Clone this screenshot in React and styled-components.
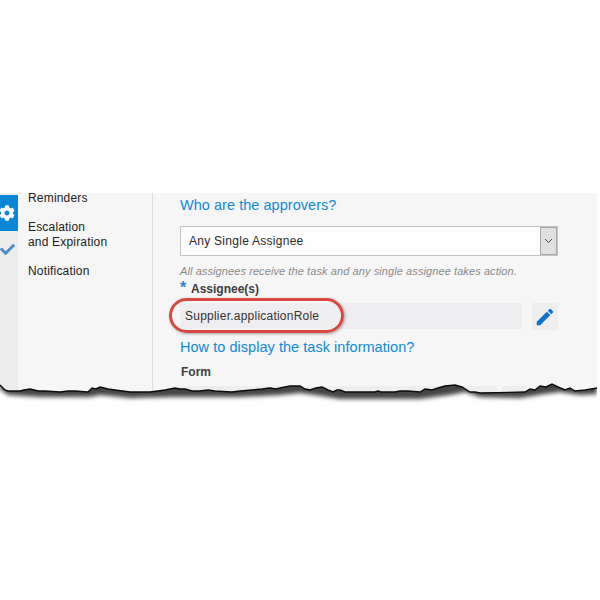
import React from "react";
import styled, { createGlobalStyle } from "styled-components";
import { FaCog, FaCheck } from "react-icons/fa";
import { MdEdit } from "react-icons/md";

const Global = createGlobalStyle`
  html, body { margin: 0; padding: 0; background: #fff; }
  body { font-family: "Liberation Sans", Arial, sans-serif; }
`;

const Page = styled.div`
  width: 600px;
  height: 600px;
  padding-top: 193px;
  box-sizing: border-box;
  overflow: hidden;
`;
const Sheet = styled.div`
  position: relative;
  width: 597px;
  height: 230px;
  overflow: hidden;
`;
const Card = styled.div`
  display: flex;
  height: 200px;
  background: #f6f6f6;
  overflow: hidden;
`;
const Rail = styled.div`
  width: 18px;
  flex: none;
  background: #ececec;
  padding-top: 2px;
  display: flex;
  flex-direction: column;
  overflow: hidden;
`;
const RailItem = styled.div`
  width: 18px;
  height: 36px;
  display: flex;
  align-items: center;
  justify-content: center;
  box-sizing: border-box;
  padding-right: 4px;
  color: ${(p) => (p.$active ? "#fff" : "#4a8ccb")};
  background: ${(p) => (p.$active ? "#0a87d4" : "transparent")};
  svg { flex: none; }
`;
const Sidebar = styled.nav`
  width: 135px;
  flex: none;
  box-sizing: border-box;
  border-right: 1px solid #dcdcdc;
  padding-left: 10px;
  display: flex;
  flex-direction: column;
  gap: 14px;
  font-size: 12px;
  letter-spacing: 0.18px;
  line-height: 15px;
  color: #1c1c1c;
`;
const NavItem = styled.div`
  &:first-child {
    line-height: 11px;
    margin-bottom: 2px;
  }
`;
const Content = styled.main`
  flex: 1;
  padding: 4px 39px 0 27px;
  min-width: 0;
`;
const Heading = styled.h2`
  margin: 0;
  font-weight: 400;
  font-size: 14.5px;
  line-height: 17px;
  letter-spacing: 0.04px;
  color: #0e8ad8;
`;
const SelectBox = styled.div`
  margin-top: 12px;
  height: 30px;
  box-sizing: border-box;
  border: 1px solid #c4c4c4;
  background: #fdfdfe;
  display: flex;
  align-items: center;
  justify-content: space-between;
  padding-left: 8px;
  font-size: 12px;
  letter-spacing: 0.27px;
  color: #2a2a2a;
`;
const SelectButton = styled.div`
  width: 17px;
  height: 28px;
  box-sizing: border-box;
  border: 1px solid #a8a8a8;
  background: #e0e0e0;
  display: flex;
  align-items: center;
  justify-content: center;
`;
const Hint = styled.div`
  margin-top: 9px;
  font-size: 11px;
  line-height: 13px;
  font-style: italic;
  letter-spacing: 0.09px;
  color: #8a8a8a;
`;
const Label = styled.div`
  margin-top: 4px;
  display: flex;
  align-items: flex-start;
  gap: 5px;
  font-size: 12px;
  line-height: 14px;
  font-weight: 700;
  color: #3d3d3d;
`;
const Star = styled.span`
  color: #2f7fc8;
  font-weight: 700;
  font-size: 16px;
  line-height: 12px;
  width: 6px;
`;
const Row = styled.div`
  margin-top: 7px;
  display: flex;
  gap: 10px;
`;
const Field = styled.div`
  position: relative;
  flex: 1;
  height: 26px;
  background: #eeeef0;
  padding-left: 5px;
  display: flex;
  align-items: center;
  font-size: 12px;
  letter-spacing: 0.23px;
  color: #333;
`;
const Callout = styled.div`
  position: absolute;
  left: -11px;
  top: -5px;
  width: 175px;
  height: 35px;
  box-sizing: border-box;
  border: 3.5px solid #d9473f;
  border-radius: 18px;
  box-shadow: 1px 1px 3px rgba(0, 0, 0, 0.35);
`;
const EditButton = styled.div`
  width: 26px;
  height: 27px;
  flex: none;
  background: #eeeeee;
  display: flex;
  align-items: center;
  justify-content: center;
  color: #0a72cf;
`;
const SectionHeading = styled(Heading)`
  margin-top: 9px;
`;
const FormLabel = styled.div`
  margin-top: 9px;
  padding-left: 1px;
  font-size: 12px;
  line-height: 14px;
  font-weight: 700;
  color: #3d3d3d;
`;
const FormRow = styled.div`
  margin-top: 7px;
  display: flex;
  gap: 5px;
  padding-right: 31px;
`;
const FormField = styled.div`
  flex: 1;
  height: 26px;
  background: #eeeeee;
`;
const FormButton = styled.div`
  width: 25px;
  height: 26px;
  background: #eeeeee;
`;
const Torn = styled.svg`
  position: absolute;
  left: 0;
  top: 180px;
  display: block;
`;

const edge = "M0,12 L5,17 L8,18 L20,18 L24,17 L30,16 L38,18 L45,18 L60,19 L68,18 L75,18 L88,19 L92,15 L96,16 L100,14 L108,16 L115,17 L130,19 L150,19 L158,18 L165,17 L175,15 L180,16 L185,16 L192,18 L200,18 L208,17 L215,18 L232,19 L240,18 L252,17 L262,16 L270,15 L276,16 L280,15 L285,14 L290,13 L300,13 L305,16 L310,17 L316,15 L322,14 L328,17 L333,19 L337,17 L340,17 L345,19 L350,19 L375,19 L378,18 L381,19 L395,19 L400,18 L408,18 L420,19 L425,16 L432,17 L438,15 L445,13 L455,12 L462,14 L470,19 L475,19 L480,20 L525,19 L530,16 L535,17 L540,13 L546,14 L552,11 L558,14 L565,17 L570,15 L575,18 L585,17 L597,15";
const shadow = "M0,16 L8,22 L40,24 L90,24 L100,22 L130,25 L170,24 L200,24 L240,24 L280,22 L300,20 L315,22 L340,26 L420,26 L450,22 L465,19 L480,24 L520,25 L545,21 L560,19 L580,22 L597,21 L597,0 L0,0 Z";

export default function App() {
  return (
    <Page>
      <Global />
      <Sheet>
        <Card>
          <Rail>
            <RailItem $active><FaCog size={16} /></RailItem>
            <RailItem><FaCheck size={15} /></RailItem>
          </Rail>
          <Sidebar>
            <NavItem>Reminders</NavItem>
            <NavItem>Escalation<br />and Expiration</NavItem>
            <NavItem>Notification</NavItem>
          </Sidebar>
          <Content>
            <Heading>Who are the approvers?</Heading>
            <SelectBox>
              Any Single Assignee
              <SelectButton>
                <svg width="9" height="6" viewBox="0 0 9 6"><path d="M1 1l3.5 3.5L8 1" fill="none" stroke="#444" strokeWidth="1" /></svg>
              </SelectButton>
            </SelectBox>
            <Hint>All assignees receive the task and any single assignee takes action.</Hint>
            <Label><Star>*</Star>Assignee(s)</Label>
            <Row>
              <Field>
                Supplier.applicationRole
                <Callout />
              </Field>
              <EditButton><MdEdit size={22} /></EditButton>
            </Row>
            <SectionHeading>How to display the task information?</SectionHeading>
            <FormLabel>Form</FormLabel>
            <FormRow>
              <FormField />
              <FormButton />
            </FormRow>
          </Content>
        </Card>
        <Torn width="597" height="50" viewBox="0 0 597 50">
          <defs>
            <filter id="tornBlur" x="-5%" y="-50%" width="110%" height="200%">
              <feGaussianBlur stdDeviation="2.2" />
            </filter>
            <clipPath id="belowEdge">
              <path d={`${edge} L597,50 L0,50 Z`} />
            </clipPath>
          </defs>
          <path d={`${edge} L597,50 L0,50 Z`} fill="#fff" />
          <g clipPath="url(#belowEdge)">
            <path d={shadow} fill="#444" filter="url(#tornBlur)" />
          </g>
          <path d={edge} fill="none" stroke="#0c0c0c" strokeWidth="1.4" />
        </Torn>
      </Sheet>
    </Page>
  );
}
